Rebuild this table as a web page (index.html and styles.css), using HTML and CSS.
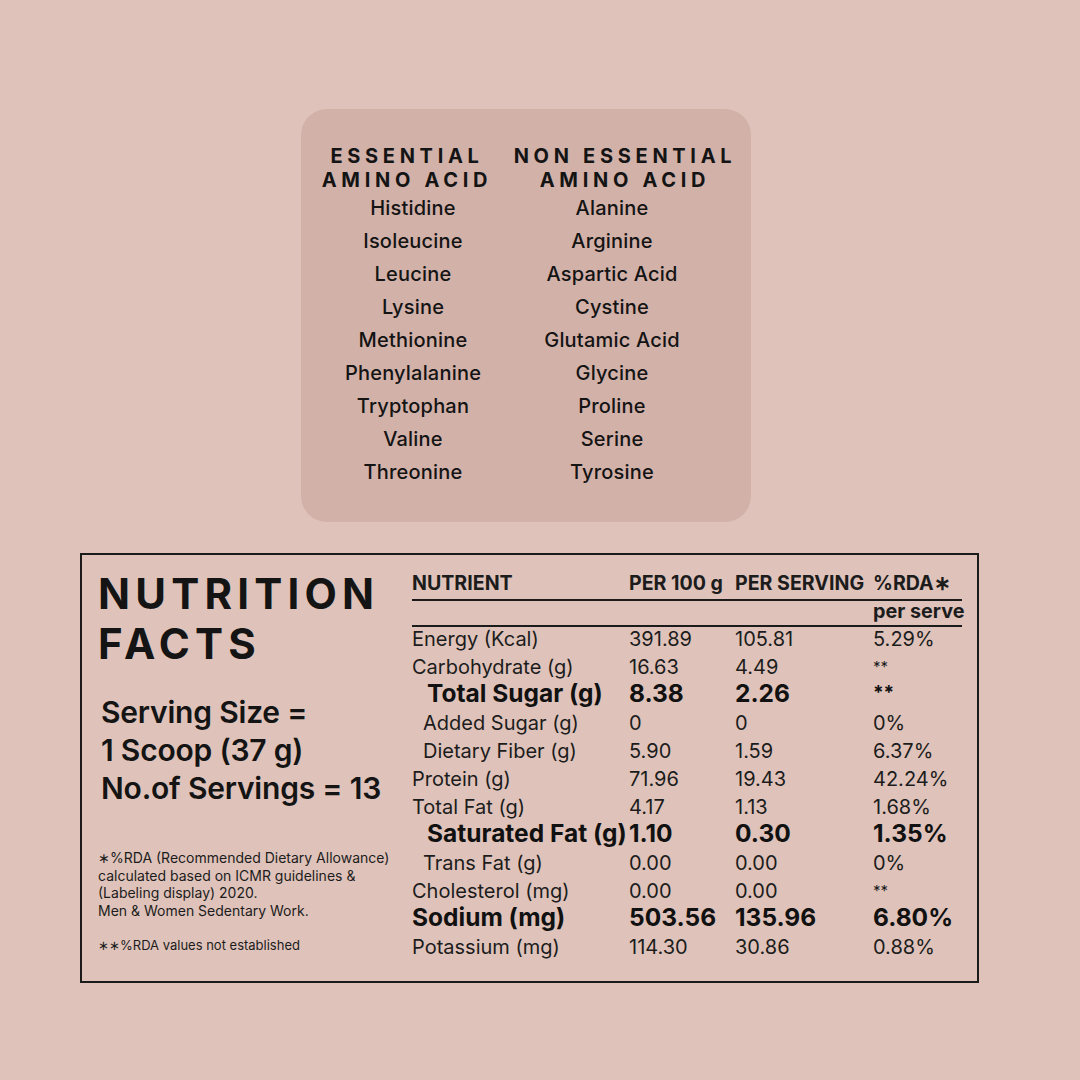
FILE: index.html
```html
<!DOCTYPE html>
<html lang="en">
<head>
<meta charset="utf-8">
<title>Nutrition Facts</title>
<link rel="stylesheet" href="styles.css">
</head>
<body>
<div class="page">
  <section class="amino">
    <div class="amino-grid">
      <div class="col">
        <h2 class="amino-head left">ESSENTIAL<br>AMINO ACID</h2>
        <ul class="amino-list">
          <li>Histidine</li>
          <li>Isoleucine</li>
          <li>Leucine</li>
          <li>Lysine</li>
          <li>Methionine</li>
          <li>Phenylalanine</li>
          <li>Tryptophan</li>
          <li>Valine</li>
          <li>Threonine</li>
        </ul>
      </div>
      <div class="col">
        <h2 class="amino-head right">NON ESSENTIAL<br>AMINO ACID</h2>
        <ul class="amino-list">
          <li>Alanine</li>
          <li>Arginine</li>
          <li>Aspartic Acid</li>
          <li>Cystine</li>
          <li>Glutamic Acid</li>
          <li>Glycine</li>
          <li>Proline</li>
          <li>Serine</li>
          <li>Tyrosine</li>
        </ul>
      </div>
    </div>
  </section>

  <section class="facts">
    <div class="facts-left">
      <h1 class="facts-title">NUTRITION<br>FACTS</h1>
      <p class="serving">Serving Size =<br>1 Scoop (37 g)<br>No.of Servings = 13</p>
      <p class="note">∗%RDA (Recommended Dietary Allowance)<br>calculated based on ICMR guidelines &amp;<br>(Labeling display) 2020.<br>Men &amp; Women Sedentary Work.</p>
      <p class="note note2">∗∗%RDA values not established</p>
    </div>
    <div class="table">
      <div class="row head">
        <span>NUTRIENT</span><span>PER 100 g</span><span>PER SERVING</span><span>%RDA∗</span>
      </div>
      <div class="row sub">
        <span></span><span></span><span></span><span>per serve</span>
      </div>
      <div class="row"><span>Energy (Kcal)</span><span>391.89</span><span>105.81</span><span>5.29%</span></div>
      <div class="row"><span>Carbohydrate (g)</span><span>16.63</span><span>4.49</span><span class="ast">**</span></div>
      <div class="row bold"><span class="in1">Total Sugar (g)</span><span>8.38</span><span>2.26</span><span class="ast">**</span></div>
      <div class="row"><span class="in2">Added Sugar (g)</span><span>0</span><span>0</span><span>0%</span></div>
      <div class="row"><span class="in2">Dietary Fiber (g)</span><span>5.90</span><span>1.59</span><span>6.37%</span></div>
      <div class="row"><span>Protein (g)</span><span>71.96</span><span>19.43</span><span>42.24%</span></div>
      <div class="row"><span>Total Fat (g)</span><span>4.17</span><span>1.13</span><span>1.68%</span></div>
      <div class="row bold"><span class="in1">Saturated Fat (g)</span><span>1.10</span><span>0.30</span><span>1.35%</span></div>
      <div class="row"><span class="in2">Trans Fat (g)</span><span>0.00</span><span>0.00</span><span>0%</span></div>
      <div class="row"><span>Cholesterol (mg)</span><span>0.00</span><span>0.00</span><span class="ast">**</span></div>
      <div class="row bold"><span>Sodium (mg)</span><span>503.56</span><span>135.96</span><span>6.80%</span></div>
      <div class="row"><span>Potassium (mg)</span><span>114.30</span><span>30.86</span><span>0.88%</span></div>
    </div>
  </section>
</div>
</body>
</html>
```

FILE: styles.css
```css
* { box-sizing: border-box; }
html, body { margin: 0; padding: 0; }
body {
  width: 1080px;
  height: 1080px;
  background: #dfc3ba;
  font-family: Inter, "Liberation Sans", sans-serif;
  color: #141414;
  overflow: hidden;
}
.page {
  padding-top: 109px;
}
.amino {
  margin-left: 301px;
  width: 450px;
  height: 413px;
  background: #d2b1a9;
  border-radius: 26px;
  padding: 35px 0 0 12px;
}
.amino-grid {
  display: grid;
  grid-template-columns: 200px 198px;
}
.col { text-align: center; }
.amino-head {
  margin: 0;
  font-size: 20px;
  font-weight: 700;
  letter-spacing: 4.7px;
  line-height: 24px;
  white-space: nowrap;
}
.amino-head.left { margin-right: 12px; }
.amino-head.right { margin-left: 0; margin-right: -26px; }
.amino-list {
  list-style: none;
  margin: 0;
  padding: 0;
  font-size: 20px;
  font-weight: 500;
  letter-spacing: 0.2px;
  line-height: 33px;
}
.facts {
  margin: 31px 0 0 80px;
  width: 899px;
  height: 430px;
  border: 2px solid #1b1b1b;
  display: flex;
}
.facts-left {
  width: 330px;
  padding: 14px 0 0 16px;
}
.facts-title {
  margin: 0;
  font-size: 42px;
  font-weight: 700;
  letter-spacing: 5.2px;
  line-height: 50px;
}
.serving {
  margin: 24px 0 0 3px;
  font-size: 30px;
  font-weight: 600;
  line-height: 38px;
  letter-spacing: -0.2px;
}
.note {
  margin: 42px 0 0 0;
  font-size: 14px;
  line-height: 17.7px;
  color: #1c1c1c;
}
.note.note2 { margin-top: 17px; font-size: 13px; }
.table {
  padding-top: 16px;
  width: 550px;
}
.row {
  display: grid;
  grid-template-columns: 217px 106px 138px 89px;
  font-size: 20px;
  line-height: 28px;
  height: 28px;
  white-space: nowrap;
  color: #1c1c1c;
}
.row.head {
  font-size: 19.6px;
  font-weight: 700;
  line-height: 24px;
  height: 30px;
  padding-bottom: 4px;
  border-bottom: 2px solid #1b1b1b;
}
.row.sub {
  font-size: 19.8px;
  font-weight: 700;
  line-height: 20px;
  height: 26px;
  padding-bottom: 4px;
  border-bottom: 2px solid #1b1b1b;
  margin-bottom: -2px;
}
.row.bold {
  font-size: 24.5px;
  font-weight: 700;
  line-height: 24px;
  color: #111;
}
.in1 { padding-left: 15px; }
.in2 { padding-left: 11px; }
.ast { font-size: 15px; }
.row.bold .ast { font-size: 19px; }
```
